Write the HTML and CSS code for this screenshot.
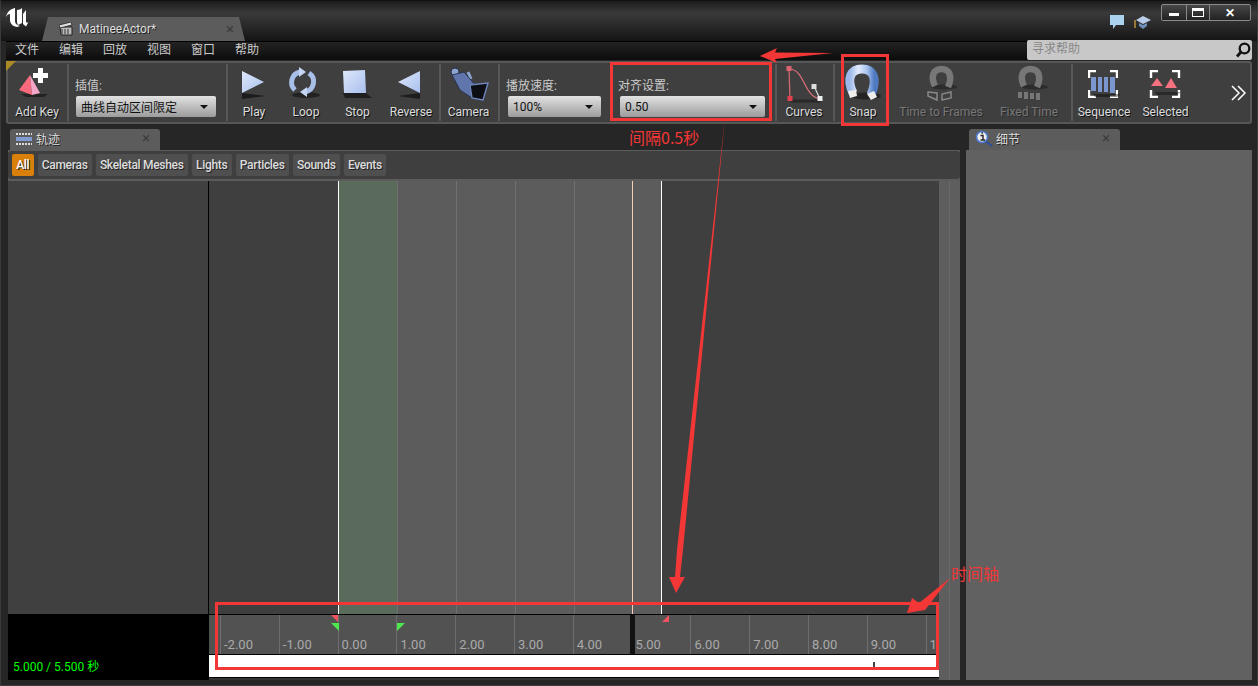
FILE: index.html
```html
<!DOCTYPE html>
<html lang="zh-CN">
<head>
    <meta charset="UTF-8">
    <title>MatineeActor</title>
    <link rel="stylesheet" href="styles.css">
</head>
<body>
    <svg class="defs" width="0" height="0">
        <defs>
            <linearGradient id="blueFill" x1="0" y1="0" x2="1" y2="1">
                <stop offset="0" stop-color="#dfe8fb"/>
                <stop offset="1" stop-color="#a8c0ee"/>
            </linearGradient>
            <linearGradient id="magnetBlue" x1="0" y1="0" x2="1" y2="0">
                <stop offset="0" stop-color="#9db8ea"/>
                <stop offset="0.35" stop-color="#e3ecfc"/>
                <stop offset="0.7" stop-color="#a8c3ee"/>
                <stop offset="1" stop-color="#4f7ac2"/>
            </linearGradient>
            <symbol id="brackets" viewBox="0 0 30 28">
                <path d="M1 8V1H8M22 1H29V8M29 20V27H22M8 27H1V20" fill="none" stroke="#fff" stroke-width="2.4"/>
            </symbol>
        </defs>
    </svg>

    <div class="window">
        <div class="titlebar">
            <svg class="ue-logo" width="24" height="22" viewBox="0 0 24 22">
                <path d="M0 9C1 4 4 1 9 0V13C9 16 11 17 14 18L11 19C6 18 4 15 4 12V6C2 6 1 7 0 9Z" fill="#fff"/>
                <path d="M11 2C13 2 15 1 16 0V15L12 17C11 15 11 14 11 12Z" fill="#fff"/>
                <path d="M17 6L20 2V13C20 15 21 15 22.500 14L20 18.500L17 16Z" fill="#fff"/>
            </svg>
            <div class="doc-tab">
                <svg width="14" height="14" viewBox="0 0 14 14">
                    <path d="M1 5H13V13H2Z" fill="#bbb" stroke="#222"/>
                    <path d="M0 3L12 0L13 3L1 6Z" fill="#ddd" stroke="#222" stroke-width=".8"/>
                    <path d="M3 7V12M6 7V12M9 7V12" stroke="#333"/>
                </svg>
                <span class="doc-name">MatineeActor*</span>
                <span class="close-x">×</span>
            </div>
            <div class="title-right">
                <svg width="16" height="16" viewBox="0 0 16 16">
                    <path d="M1 1H15V11H7L4 15V11H1Z" fill="#a9d3ee"/>
                </svg>
                <svg width="18" height="16" viewBox="0 0 18 16">
                    <path d="M9 2L17 6L9 10L2 6Z" fill="#b9cde8"/>
                    <path d="M5 9V12L9 15L13 12V9L9 11Z" fill="#6f8fb8"/>
                    <path d="M1 6V14" stroke="#c9973b" stroke-width="1.4"/>
                </svg>
                <div class="win-buttons">
                    <div class="win-btn win-min"><i class="min-glyph"></i></div>
                    <div class="win-btn win-max"><i class="max-glyph"></i></div>
                    <div class="win-btn win-close">✕</div>
                </div>
            </div>
        </div>

        <div class="menubar">
            <div class="menu-items">
                <span>文件</span><span>编辑</span><span>回放</span><span>视图</span><span>窗口</span><span>帮助</span>
            </div>
            <div class="search">
                <span class="search-hint">寻求帮助</span>
                <svg width="16" height="16" viewBox="0 0 16 16">
                    <circle cx="9.500" cy="6.500" r="4.800" fill="none" stroke="#111" stroke-width="2.300"/>
                    <path d="M6 10L2 14.500" stroke="#111" stroke-width="2.800"/>
                </svg>
            </div>
        </div>

        <div class="toolbar">
            <i class="corner"></i>
            <div class="tool tool-add">
                <svg width="38" height="36" viewBox="0 0 38 36">
                    <path d="M3 28H30L26 31H8Z" fill="#000" opacity=".45"/>
                    <path d="M12 9L1 24L14 29Z" fill="#fb6a7c"/>
                    <path d="M12 9L22 27L14 29Z" fill="#f3a6c8"/>
                    <path d="M21 2H26V7H31V12H26V17H21V12H16V7H21Z" fill="#fff" transform="translate(-1 0)"/>
                </svg>
                <span>Add Key</span>
            </div>
            <i class="sep"></i>
            <div class="combo-group group-interp">
                <label>插值:</label>
                <div class="combo combo-interp"><span>曲线自动区间限定</span><i class="caret"></i></div>
            </div>
            <i class="sep"></i>
            <div class="tool tool-play">
                <svg width="38" height="36" viewBox="0 0 38 36">
                    <path d="M7 27L31 30L7 33Z" fill="#000" opacity=".55"/>
                    <path d="M7 5L29 16L7 27Z" fill="url(#blueFill)"/>
                </svg>
                <span>Play</span>
            </div>
            <div class="tool tool-loop">
                <svg width="38" height="36" viewBox="0 0 38 36">
                    <ellipse cx="19" cy="29" rx="14" ry="3" fill="#000" opacity=".45"/>
                    <path d="M13 6A10.500 10.500 0 0 0 8 24" fill="none" stroke="#a8bfe8" stroke-width="5"/>
                    <path d="M22 7A10.500 10.500 0 0 1 18 26" fill="none" stroke="#a8bfe8" stroke-width="5"/>
                    <path d="M12 1L19 6L12 11Z" fill="#c6d5f3"/>
                    <path d="M20 21L13 26L20 31Z" fill="#c6d5f3"/>
                </svg>
                <span>Loop</span>
            </div>
            <div class="tool tool-stop">
                <svg width="38" height="36" viewBox="0 0 38 36">
                    <path d="M4 27H27L33 32H6Z" fill="#000" opacity=".5"/>
                    <path d="M4 5L26 4L27 27L5 27Z" fill="url(#blueFill)"/>
                </svg>
                <span>Stop</span>
            </div>
            <div class="tool tool-reverse">
                <svg width="38" height="36" viewBox="0 0 38 36">
                    <path d="M28 27L6 30L28 33Z" fill="#000" opacity=".55"/>
                    <path d="M28 5L6 16L28 27Z" fill="url(#blueFill)"/>
                </svg>
                <span>Reverse</span>
            </div>
            <i class="sep"></i>
            <div class="tool tool-camera">
                <svg width="38" height="36" viewBox="0 0 38 36">
                    <circle cx="5" cy="6" r="4" fill="#8ea4d0" stroke="#26304a"/>
                    <path d="M18 6L21 13" stroke="#8ea4d0" stroke-width="3"/>
                    <path d="M2 9L14 6L26 20L22 32L10 24Z" fill="#5f75ab" stroke="#2a3350"/>
                    <path d="M20 19L38 17L33 34L22 32Z" fill="#0c0e14" stroke="#6f86bd" stroke-width="1.400"/>
                </svg>
                <span>Camera</span>
            </div>
            <i class="sep"></i>
            <div class="combo-group group-speed">
                <label>播放速度:</label>
                <div class="combo combo-speed"><span>100%</span><i class="caret"></i></div>
            </div>
            <div class="combo-group group-snap">
                <label>对齐设置:</label>
                <div class="combo combo-snap"><span>0.50</span><i class="caret"></i></div>
            </div>
            <i class="sep"></i>
            <div class="tool tool-curves">
                <svg width="38" height="36" viewBox="0 0 38 36">
                    <path d="M4 3L5 33" stroke="#d96a74" stroke-width="1.200"/>
                    <path d="M4 3C20 3 18 30 35 33" fill="none" stroke="#e0707c" stroke-width="1.200"/>
                    <path d="M29 20L35 33" stroke="#ddd" stroke-width="1.200"/>
                    <path d="M6 35H36" stroke="#000" stroke-width="3" opacity=".35"/>
                    <rect x="1.500" y="0" width="5" height="5" fill="#d9636e"/>
                    <rect x="2.500" y="30" width="5" height="5" fill="#e2404e"/>
                    <rect x="26.500" y="18" width="5" height="5" fill="#ddd"/>
                    <rect x="32.500" y="30" width="5" height="5" fill="#eee"/>
                </svg>
                <span>Curves</span>
            </div>
            <i class="sep"></i>
            <div class="tool tool-snap">
                <svg width="38" height="36" viewBox="0 0 38 36">
                    <ellipse cx="22" cy="30" rx="15" ry="3.500" fill="#000" opacity=".4"/>
                    <path d="M9 27C2 12 7 3 18 3C29 3 34 12 27 29" fill="none" stroke="url(#magnetBlue)" stroke-width="9"/>
                    <path d="M4 25L12 24L13 30L6 32Z" fill="#eee"/>
                    <path d="M23 28L30 25L33 31L27 34Z" fill="#eee"/>
                </svg>
                <span>Snap</span>
            </div>
            <div class="tool tool-frames is-off">
                <svg width="38" height="36" viewBox="0 0 38 36">
                    <ellipse cx="22" cy="21" rx="13" ry="2.500" fill="#000" opacity=".3"/>
                    <path d="M13 20C8 10 12 3 19.500 3C27 3 31 10 26 21" fill="none" stroke="#777" stroke-width="6.500"/>
                    <path d="M6 26L15 27V34L6 30ZM20 34L29 32V26L20 28Z" fill="none" stroke="#888" stroke-width="1.500"/>
                </svg>
                <span>Time to Frames</span>
            </div>
            <div class="tool tool-fixed is-off">
                <svg width="38" height="36" viewBox="0 0 38 36">
                    <ellipse cx="25" cy="21" rx="13" ry="2.500" fill="#000" opacity=".3"/>
                    <path d="M14 20C9 10 13 3 20.500 3C28 3 32 10 27 21" fill="none" stroke="#777" stroke-width="6.500"/>
                    <path d="M8 26H12V32H8ZM14 26H18V33H14ZM20 27H24V33H20ZM26 27H30V34H26Z" fill="#777"/>
                </svg>
                <span>Fixed Time</span>
            </div>
            <i class="sep sep-late"></i>
            <div class="tool tool-sequence">
                <svg width="38" height="36" viewBox="0 0 38 36">
                    <use href="#brackets" x="3" y="4" width="30" height="28"/>
                    <path d="M8 28H36L32 31H10Z" fill="#000" opacity=".4"/>
                    <path d="M6 11H11V25H6ZM13 11H17V26H13ZM19 11H23V26H19ZM25 11H30V27H25Z" fill="#7c96cf"/>
                </svg>
                <span>Sequence</span>
            </div>
            <div class="tool tool-selected">
                <svg width="38" height="36" viewBox="0 0 38 36">
                    <use href="#brackets" x="2" y="4" width="32" height="28"/>
                    <path d="M10 12L16 20H4Z" fill="#f4727f"/>
                    <path d="M24 12L30 22H18Z" fill="#f4727f"/>
                    <path d="M8 26H34L30 29H10Z" fill="#000" opacity=".35"/>
                </svg>
                <span>Selected</span>
            </div>
            <svg class="more" width="16" height="16" viewBox="0 0 16 16">
                <path d="M1 1L8 8L1 15M7 1L14 8L7 15" fill="none" stroke="#fff" stroke-width="1.500"/>
            </svg>
        </div>

        <div class="dock">
            <div class="dock-left">
                <div class="panel-tab">
                    <svg width="16" height="12" viewBox="0 0 16 12">
                        <path d="M0 1H16" stroke="#ddd" stroke-dasharray="2 1" stroke-width="2"/>
                        <path d="M0 6H16" stroke="#7f9bd2" stroke-width="4"/>
                        <path d="M0 11H16" stroke="#ddd" stroke-dasharray="2 1" stroke-width="2"/>
                    </svg>
                    <span class="tab-name">轨迹</span>
                    <span class="close-x">×</span>
                </div>
                <div class="panel-body">
                    <div class="filters">
                        <span class="filter is-on">All</span>
                        <span class="filter">Cameras</span>
                        <span class="filter">Skeletal Meshes</span>
                        <span class="filter">Lights</span>
                        <span class="filter">Particles</span>
                        <span class="filter">Sounds</span>
                        <span class="filter">Events</span>
                    </div>
                    <div class="track-view">
                        <div class="track-main">
                            <div class="track-top">
                                <div class="track-names"></div>
                                <div class="bands">
                                    <div class="band band-before"></div>
                                    <div class="band band-loop"></div>
                                    <div class="band band-grey"></div>
                                    <div class="band band-grey"></div>
                                    <div class="band band-grey"></div>
                                    <div class="band band-grey"></div>
                                    <div class="band band-pink"></div>
                                    <div class="band band-after"></div>
                                </div>
                            </div>
                            <div class="track-bottom">
                                <div class="clock">5.000 / 5.500 秒</div>
                                <div class="scale">
                                    <div class="ruler">
                                        <span class="tick">-2.00</span>
                                        <span class="tick">-1.00</span>
                                        <span class="tick">0.00</span>
                                        <span class="tick">1.00</span>
                                        <span class="tick">2.00</span>
                                        <span class="tick">3.00</span>
                                        <span class="tick">4.00</span>
                                        <span class="tick tick-dark">5.00</span>
                                        <span class="tick">6.00</span>
                                        <span class="tick">7.00</span>
                                        <span class="tick">8.00</span>
                                        <span class="tick">9.00</span>
                                        <span class="tick">10.00</span>
                                        <i class="flag flag-red"></i>
                                        <i class="flag flag-green"></i>
                                        <i class="flag flag-green2"></i>
                                        <i class="flag flag-end"></i>
                                    </div>
                                    <div class="overview"><i class="overview-mark"></i></div>
                                </div>
                            </div>
                        </div>
                        <div class="track-scroll"></div>
                    </div>
                </div>
            </div>
            <div class="dock-right">
                <div class="panel-tab">
                    <svg width="18" height="18" viewBox="0 0 18 18">
                        <circle cx="7" cy="7" r="5.500" fill="#eee" stroke="#4d78cc" stroke-width="1.600"/>
                        <path d="M11 11.500L17 16" stroke="#2b4f9c" stroke-width="2"/>
                        <path d="M5.500 5.500H8V9.500M5.500 10H10M6.500 3H8" fill="none" stroke="#222" stroke-width="1.400"/>
                    </svg>
                    <span class="tab-name">细节</span>
                    <span class="close-x">×</span>
                </div>
                <div class="details"></div>
            </div>
        </div>
    </div>

    <svg class="notes" width="1258" height="686" viewBox="0 0 1258 686">
        <rect x="611.500" y="63.500" width="159" height="56"/>
        <rect x="842.500" y="55.500" width="45" height="69"/>
        <rect x="216.500" y="603.500" width="721" height="65"/>
        <path class="arrow" d="M760 56L777 48L775 52.500L833 53L775 59L777 63Z"/>
        <path class="arrow" d="M725 118L683 550L680 577H685L676 593L669 577H675L677 550Z"/>
        <path class="arrow" d="M950 578L925 610L907 613L912 598L919 603Z"/>
    </svg>
    <span class="note note-gap">间隔0.5秒</span>
    <span class="note note-axis">时间轴</span>
</body>
</html>
```

FILE: styles.css
```css
* {
    box-sizing: border-box;
}

body {
    margin: 0;
    width: 1258px;
    height: 686px;
    overflow: hidden;
    background-color: #222;
    font-family: Roboto, "Noto Sans CJK SC", sans-serif;
    font-size: 12px;
    color: #ddd;
}

.defs {
    position: absolute;
}

.window {
    height: 686px;
    padding: 0 5px 5px 5px;
    display: flex;
    flex-direction: column;
    border: 1px solid #3a3a3a;
    border-top-color: #111;
    background-color: #262626;
}

/* title bar */
.titlebar {
    height: 40px;
    margin: 0 -5px;
    padding-left: 5px;
    display: flex;
    align-items: flex-end;
    background: linear-gradient(#1c1c1c, #3a3a3a 30%, #141414);
    position: relative;
}

.ue-logo {
    align-self: flex-start;
    margin-top: 7px;
    flex: none;
}

.doc-tab {
    width: 203px;
    height: 24px;
    margin-left: 12px;
    padding: 0 11px 0 17px;
    display: flex;
    align-items: center;
    gap: 6px;
    background-color: #5c5c5c;
    border-radius: 5px 5px 0 0;
    clip-path: polygon(0 100%, 6px 0, calc(100% - 6px) 0, 100% 100%);
    flex: none;
}

.doc-name {
    flex: 1;
    color: #ddd;
    text-shadow: 1px 1px 0 #222;
}

.close-x {
    font-size: 15px;
    line-height: 1;
    color: #3c3c3c;
}

.title-right {
    margin-left: auto;
    padding-right: 6px;
    align-self: stretch;
    display: flex;
    gap: 9px;
}

.title-right > svg {
    margin-top: 13px;
}

.win-buttons {
    margin-top: 3px;
    height: 17px;
    display: flex;
    border: 1px solid #8a8a8a;
    border-radius: 2px;
    background: linear-gradient(#474747, #222);
}

.win-btn {
    display: flex;
    align-items: center;
    justify-content: center;
    color: #fff;
    font-size: 12px;
    font-weight: bold;
    border-right: 1px solid #8a8a8a;
}

.win-min {
    width: 25px;
}

.win-max {
    width: 23px;
}

.win-close {
    width: 40px;
    border-right: none;
}

.min-glyph {
    width: 10px;
    height: 3px;
    margin-top: 3px;
    background-color: #fff;
}

.max-glyph {
    width: 12px;
    height: 9px;
    border: 1px solid #fff;
    border-top-width: 3px;
}

/* menu */
.menubar {
    height: 19px;
    display: flex;
    justify-content: space-between;
    background: linear-gradient(#232323, #0c0c0c);
    border-top: 1px solid #000;
}

.menu-items {
    padding-left: 9px;
    display: flex;
    gap: 20px;
    line-height: 16px;
    color: #ccc;
}

.search {
    width: 225px;
    height: 20px;
    margin-top: -2px;
    padding: 0 1px 0 5px;
    display: flex;
    align-items: center;
    justify-content: space-between;
    background-color: #c8c8c8;
    color: #888;
    border-radius: 2px;
    line-height: 14px;
    position: relative;
}

.search-hint {
    margin-bottom: 3px;
}

/* toolbar */
.toolbar {
    height: 63px;
    margin-top: 1px;
    display: flex;
    position: relative;
    background-color: #3f3f3f;
    border: 2px solid #575757;
    border-radius: 3px;
    padding-left: 1px;
}

.corner {
    position: absolute;
    left: -2px;
    top: -2px;
    width: 0;
    height: 0;
    border-top: 10px solid #ad8a28;
    border-right: 10px solid transparent;
}

.sep {
    width: 2px;
    margin: 1px 0;
    background-color: #575757;
    flex: none;
}

.sep-late {
    margin-left: 6px;
}

.tool {
    height: 59px;
    padding-top: 3px;
    display: flex;
    flex-direction: column;
    align-items: center;
    flex: none;
    color: #ddd;
    text-shadow: 1px 1px 0 #111;
    white-space: nowrap;
}

.tool svg {
    flex: none;
    overflow: visible;
}

.tool span {
    margin-top: 3px;
    line-height: 14px;
}

.tool.is-off span {
    color: #777;
    text-shadow: 1px 1px 0 #2b2b2b;
}

.tool-add { width: 56px; margin-right: 2px; }
.tool-play { width: 52px; }
.tool-loop { width: 52px; }
.tool-stop { width: 51px; }
.tool-reverse { width: 56px; }
.tool-camera { width: 55px; margin-right: 2px; }
.tool-curves { width: 54px; margin-right: 2px; }
.tool-snap { width: 52px; margin-left: 2px; }
.tool-frames { width: 104px; }
.tool-fixed { width: 72px; }
.tool-sequence { width: 62px; margin-right: 2px; }
.tool-selected { width: 57px; }

.more {
    position: absolute;
    right: 3px;
    top: 22px;
}

.combo-group {
    padding-top: 15px;
    flex: none;
    color: #ccc;
}

.combo-group label {
    display: block;
    height: 18px;
    line-height: 16px;
    margin-left: -1px;
}

.group-interp {
    width: 157px;
    padding-left: 7px;
}

.group-speed {
    width: 108px;
    padding-left: 8px;
}

.group-snap {
    width: 167px;
    padding-left: 12px;
}

.group-speed label,
.group-snap label {
    margin-left: -2px;
}

.combo {
    height: 21px;
    padding: 0 5px;
    display: flex;
    align-items: center;
    justify-content: space-between;
    background: linear-gradient(#e2e2e2, #9c9c9c);
    border-radius: 2px;
    color: #111;
}

.combo-interp { width: 140px; }
.combo-speed { width: 93px; }
.combo-snap { width: 145px; }

.caret {
    width: 0;
    height: 0;
    border-left: 4px solid transparent;
    border-right: 4px solid transparent;
    border-top: 4px solid #111;
    margin-right: 3px;
}

/* dock panels */
.dock {
    flex: 1;
    min-height: 0;
    display: flex;
    gap: 6px;
    padding: 5px 0 0 2px;
}

.dock-left {
    width: 952px;
    display: flex;
    flex-direction: column;
}

.dock-right {
    width: 286px;
    display: flex;
    flex-direction: column;
}

.panel-tab {
    width: 150px;
    height: 21px;
    margin-left: 2px;
    padding: 0 10px 2px 6px;
    display: flex;
    align-items: center;
    gap: 4px;
    background-color: #5c5c5c;
    border-radius: 3px 3px 0 0;
    flex: none;
}

.dock-right .panel-tab {
    width: 151px;
    margin-left: 3px;
    padding-left: 6px;
    gap: 3px;
}

.tab-name {
    flex: 1;
    color: #ddd;
    text-shadow: 1px 1px 0 #222;
}

.panel-body {
    flex: 1;
    min-height: 0;
    display: flex;
    flex-direction: column;
    background-color: #5c5c5c;
    padding-top: 1px;
}

.filters {
    height: 28px;
    padding: 3px 0 0 4px;
    display: flex;
    gap: 4px;
    background-color: #3f3f3f;
    border-radius: 3px;
    flex: none;
}

.filter {
    height: 22px;
    padding: 0 4.200px;
    line-height: 22px;
    font-weight: 500;
    letter-spacing: -0.3px;
    color: #ddd;
    background-color: #4f4f4f;
    border-radius: 2px;
    text-shadow: 1px 1px 0 #222;
}

.filter.is-on {
    background-color: #d9800b;
    color: #fff;
}

.track-view {
    margin-top: 2px;
    flex: 1;
    min-height: 0;
    display: flex;
}

.track-main {
    width: 931px;
    flex: none;
    display: flex;
    flex-direction: column;
}

.track-top {
    height: 433px;
    display: flex;
    flex: none;
}

.track-names {
    width: 201px;
    background-color: #404040;
    border-right: 1px solid #000;
    flex: none;
}

.bands {
    flex: 1;
    display: flex;
}

.band {
    flex: none;
    border-left: 1px solid #707070;
    background-color: #5c5c5c;
}

.band-before {
    width: 129px;
    border-left: none;
    background-color: #3f3f3f;
}

.band-loop {
    width: 59px;
    border-left-color: #fff;
    background-color: #5a6b5b;
}

.band-grey {
    width: 59px;
}

.band-grey:nth-child(6) {
    width: 58px;
}

.band-pink {
    width: 29px;
    border-left-color: #f6cdb8;
}

.band-after {
    flex: 1;
    border-left-color: #fff;
    background-color: #3f3f3f;
}

.track-bottom {
    flex: 1;
    display: flex;
    min-height: 0;
}

.clock {
    width: 201px;
    padding: 43px 0 0 5px;
    background-color: #000;
    color: #0f0;
    flex: none;
}

.scale {
    flex: 1;
    min-width: 0;
    display: flex;
    flex-direction: column;
    border-top: 1px solid #000;
    background-color: #333;
}

.ruler {
    height: 39px;
    padding-left: 11px;
    display: flex;
    position: relative;
    overflow: hidden;
    background-color: #525252;
    border-bottom: 1px solid #000;
    box-sizing: content-box;
    flex: none;
}

.tick {
    width: 58.800px;
    padding: 22px 0 0 3px;
    flex: none;
    border-left: 1px solid #6e6e6e;
    color: #aaa;
    line-height: 15px;
    font-size: 13px;
}

.tick-dark {
    border-left: 5px solid #111;
    margin-left: -2px;
    width: 60.800px;
    padding-left: 1px;
}

.flag {
    position: absolute;
    width: 0;
    height: 0;
}

.flag-red {
    left: 122px;
    top: 0;
    border-top: 7px solid #f0525e;
    border-left: 7px solid transparent;
}

.flag-green {
    left: 122px;
    top: 8px;
    border-top: 8px solid #4de84d;
    border-left: 8px solid transparent;
}

.flag-green2 {
    left: 188px;
    top: 8px;
    border-top: 8px solid #4de84d;
    border-right: 8px solid transparent;
}

.flag-end {
    left: 453px;
    top: 0;
    border-bottom: 7px solid #f0525e;
    border-left: 7px solid transparent;
}

.overview {
    height: 23px;
    background-color: #fff;
    border-bottom: 1px solid #000;
    position: relative;
    flex: none;
}

.overview-mark {
    position: absolute;
    left: 664px;
    top: 7px;
    width: 2px;
    height: 6px;
    background-color: #444;
}

.track-scroll {
    flex: 1;
    background-color: #5e5e5e;
    box-shadow: inset -10px 0 0 #5e5e5e, inset -11px 0 0 #6a6a6a;
}

.details {
    flex: 1;
    background-color: #616161;
}

/* annotations drawn on top of the screenshot */
.notes {
    position: absolute;
    left: 0;
    top: 0;
}

.notes rect {
    fill: none;
    stroke: #f33636;
    stroke-width: 3;
}

.notes .arrow {
    fill: #f33636;
}

.note {
    position: absolute;
    color: #f33636;
    font-size: 16px;
    line-height: 20px;
    font-family: "Noto Sans CJK SC", sans-serif;
}

.note-gap {
    left: 629px;
    top: 127px;
}

.note-axis {
    left: 951px;
    top: 563px;
}
```
